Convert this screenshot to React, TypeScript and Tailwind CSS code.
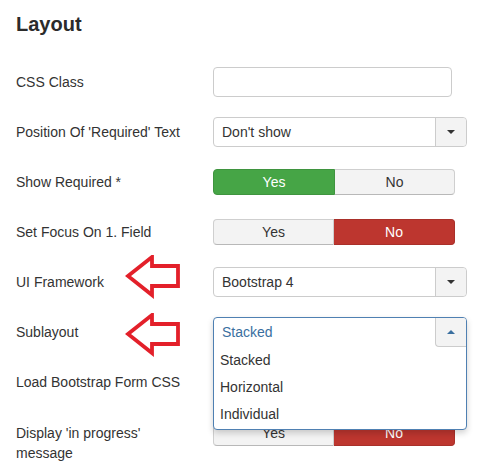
import React from "react";

const Caret = ({ up = false, color = "#333" }: { up?: boolean; color?: string }) =>
  up ? (
    <div className="h-0 w-0 border-x-[4px] border-x-transparent border-b-[4px]" style={{ borderBottomColor: color }} />
  ) : (
    <div className="h-0 w-0 border-x-[4px] border-x-transparent border-t-[4px]" style={{ borderTopColor: color }} />
  );

const Select = ({ value }: { value: string }) => (
  <div className="flex h-[30px] w-[254px] rounded-[4px] border border-[#cccccc] bg-white">
    <div className="flex flex-1 items-center pl-[8px] text-[14px] text-[#333]">{value}</div>
    <div className="flex w-[31px] items-center justify-center rounded-r-[4px] border-l border-[#cccccc] bg-[#f3f3f3]">
      <Caret />
    </div>
  </div>
);

const Toggle = ({ yes, showText = true }: { yes: boolean; showText?: boolean }) => (
  <div className="flex h-[26px] w-[242px] text-[14px]">
    <div
      className={
        yes
          ? "flex w-[122px] items-center justify-center rounded-l-[4px] border border-[#3f943f] bg-[#46a546] text-white"
          : "flex w-[121px] items-center justify-center rounded-l-[4px] border border-[#cfcfcf] border-b-[#b8b8b8] bg-[#f3f3f3] text-[#333]"
      }
    >
      {showText ? "Yes" : null}
    </div>
    <div
      className={
        yes
          ? "flex flex-1 items-center justify-center rounded-r-[4px] border border-l-0 border-[#cfcfcf] border-b-[#b8b8b8] bg-[#f3f3f3] text-[#333]"
          : "flex flex-1 items-center justify-center rounded-r-[4px] border border-l-0 border-[#a9302a] bg-[#bd362f] text-white"
      }
    >
      {showText ? "No" : null}
    </div>
  </div>
);

const Row = ({ label, children }: { label: string; children: React.ReactNode }) => (
  <div className="flex h-[50px] items-center">
    <div className="w-[197px] pr-[20px] text-[14px] leading-[20px] text-[#333]">{label}</div>
    {children}
  </div>
);

const Arrow = ({ x, y }: { x: number; y: number }) => (
  <svg
    className="pointer-events-none absolute"
    style={{ left: x, top: y }}
    width="60"
    height="46"
    viewBox="0 0 60 46"
  >
    <polygon
      points="3,21 27,2 27,11 53,11 53,31 27,31 27,40"
      fill="none"
      stroke="#e3202a"
      strokeWidth="3.8"
      strokeLinejoin="miter"
    />
  </svg>
);

export default function App() {
  return (
    <div
      className="relative h-[473px] w-[487px] overflow-hidden bg-white px-[16px] text-[#333]"
      style={{ fontFamily: '"Liberation Sans", Arial, Helvetica, sans-serif' }}
    >
      <div className="pt-[12px] text-[20px] font-bold leading-[24px] text-[#2b2b2b]">Layout</div>
      <div className="mt-[21px]">
        <Row label="CSS Class">
          <div className="h-[30px] w-[239px] rounded-[4px] border border-[#cccccc] bg-white" />
        </Row>
        <Row label="Position Of 'Required' Text">
          <Select value="Don't show" />
        </Row>
        <Row label="Show Required *">
          <Toggle yes />
        </Row>
        <Row label="Set Focus On 1. Field">
          <Toggle yes={false} />
        </Row>
        <Row label="UI Framework">
          <Select value="Bootstrap 4" />
        </Row>
        <Row label="Sublayout">
          <div className="relative z-10 h-[30px] w-[254px]">
            <div className="absolute left-0 top-0 w-[254px] rounded-[4px] border border-[#4f80b2] bg-white shadow-[0_3px_6px_rgba(0,0,0,0.18)]">
              <div className="flex h-[29px]">
                <div className="flex flex-1 items-center pl-[8px] text-[14px] text-[#3a6f9f]">Stacked</div>
                <div className="flex w-[31px] items-center justify-center rounded-bl-[4px] rounded-tr-[3px] border-b border-l border-[#cccccc] bg-[#f3f3f3]">
                  <Caret up color="#3a6f9f" />
                </div>
              </div>
              <div className="pb-[1px]">
                <div className="flex h-[27px] items-center pl-[6px] text-[14px] text-[#333]">Stacked</div>
                <div className="flex h-[27px] items-center pl-[6px] text-[14px] text-[#333]">Horizontal</div>
                <div className="flex h-[27px] items-center pl-[6px] text-[14px] text-[#333]">Individual</div>
              </div>
            </div>
          </div>
        </Row>
        <Row label="Load Bootstrap Form CSS">
          <Toggle yes={false} showText={false} />
        </Row>
        <div className="flex items-start">
          <div className="w-[197px] pr-[20px] pt-[16px] text-[14px] leading-[20px] text-[#333]">
            Display 'in progress' message
          </div>
          <div className="pt-[13px]">
            <Toggle yes={false} />
          </div>
        </div>
      </div>
      <Arrow x={125} y={255} />
      <Arrow x={125} y={313} />
    </div>
  );
}
